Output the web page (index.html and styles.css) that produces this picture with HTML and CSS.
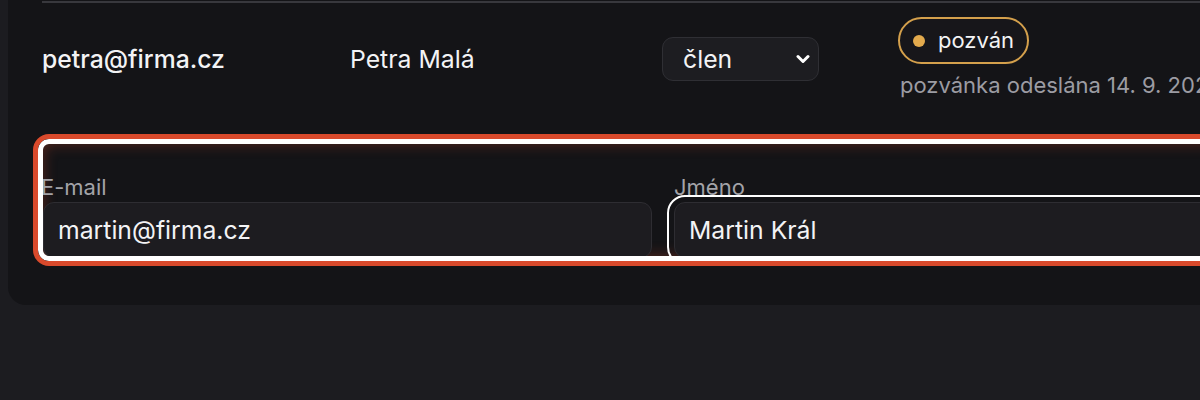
FILE: index.html
```html
<!DOCTYPE html>
<html lang="cs">
<head>
<meta charset="utf-8">
<title>Členové</title>
<link rel="stylesheet" href="styles.css">
</head>
<body>
<div class="card">
  <div class="row">
    <div class="cell email">petra@firma.cz</div>
    <div class="cell name">Petra Malá</div>
    <div class="cell role">
      <div class="select">
        <span>člen</span>
        <svg class="chev" width="14" height="10" viewBox="0 0 14 10"><path d="M2 2.5 L7 7.5 L12 2.5" fill="none" stroke="#fff" stroke-width="3" stroke-linecap="round" stroke-linejoin="round"/></svg>
      </div>
    </div>
    <div class="cell status">
      <div class="badge"><span class="dot"></span><span>pozván</span></div>
      <div class="sub">pozvánka odeslána 14. 9. 2024</div>
    </div>
  </div>
  <div class="ring">
    <div class="ring-inner">
      <div class="fields">
        <div class="field">
          <label class="label first">E-mail</label>
          <div class="input">martin@firma.cz</div>
        </div>
        <div class="field">
          <label class="label">Jméno</label>
          <div class="input focused">Martin Král</div>
        </div>
      </div>
    </div>
  </div>
</div>
</body>
</html>
```
FILE: styles.css
```css
html, body {
  margin: 0;
  padding: 0;
}
body {
  background: #1c1c20;
  font-family: Inter, "Noto Sans", sans-serif;
  color: #f3f3f5;
  width: 1200px;
  height: 400px;
  overflow: hidden;
}
.card {
  margin-left: 8px;
  width: 1400px;
  height: 305px;
  box-sizing: border-box;
  background: #141417;
  border-radius: 0 0 18px 18px;
  padding: 1px 0 0 25px;
}
.row {
  margin-left: 9px;
  border-top: 2px solid #38383d;
  display: grid;
  grid-template-columns: 308px 312px 236px 1fr;
  align-items: center;
  padding: 14px 0 14px 0;
  font-size: 24.75px;
}
.email {
  font-weight: 500;
}
.select {
  width: 157px;
  height: 44px;
  box-sizing: border-box;
  border: 1px solid #2f2f34;
  border-radius: 11px;
  background: #1d1d21;
  display: flex;
  align-items: center;
  justify-content: space-between;
  padding: 0 8px 0 20px;
}
.chev {
  display: block;
}
.status {
  display: flex;
  flex-direction: column;
  align-items: flex-start;
  padding-bottom: 2px;
}
.badge {
  display: flex;
  align-items: center;
  gap: 13px;
  border: 2px solid #d4a04c;
  border-radius: 999px;
  padding: 8px 13px;
  font-size: 22px;
  line-height: 27px;
  background: #17161a;
}
.dot {
  width: 12px;
  height: 12px;
  border-radius: 50%;
  background: #e3aa4d;
}
.sub {
  margin-top: 8px;
  margin-left: 2px;
  font-size: 22px;
  line-height: 26px;
  color: #9c9ca3;
  white-space: nowrap;
}
.ring {
  margin-top: 20px;
  width: 1300px;
  border: 5px solid #d94a2c;
  border-radius: 16px;
  overflow: hidden;
}
.ring-inner {
  border: 5px solid #ffffff;
  border-radius: 11px;
  height: 112px;
  overflow: hidden;
  background: #141417;
  box-shadow: inset 0 0 14px rgba(217, 74, 44, 0.35);
}
.fields {
  display: grid;
  grid-template-columns: 609px 609px;
  column-gap: 22px;
  padding-top: 31px;
}
.label {
  display: block;
  font-size: 22px;
  line-height: 24px;
  color: #a3a3a8;
  margin-bottom: 3px;
}
.label.first {
  margin-left: -2px;
}
.input {
  height: 56px;
  box-sizing: border-box;
  border: 1px solid #2e2d32;
  border-radius: 11px;
  background: #1d1c20;
  font-size: 24.75px;
  display: flex;
  align-items: center;
  padding-left: 14px;
}
.input.focused {
  outline: 2px solid #ffffff;
  outline-offset: 5px;
}
```
